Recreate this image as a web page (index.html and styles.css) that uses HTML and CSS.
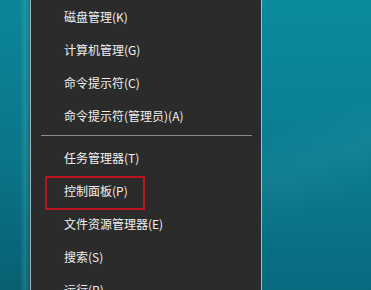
FILE: index.html
```html
<!DOCTYPE html>
<html lang="zh-CN">
<head>
<meta charset="utf-8">
<link rel="stylesheet" href="styles.css">
</head>
<body>
<div class="desktop">
  <div class="strip"></div>
  <ul class="menu">
    <li class="item">磁盘管理(K)</li>
    <li class="item">计算机管理(G)</li>
    <li class="item">命令提示符(C)</li>
    <li class="item">命令提示符(管理员)(A)</li>
    <li class="sep"></li>
    <li class="item">任务管理器(T)</li>
    <li class="item marked">控制面板(P)<span class="mark"></span></li>
    <li class="item">文件资源管理器(E)</li>
    <li class="item">搜索(S)</li>
    <li class="item">运行(R)</li>
  </ul>
  <div class="wall"></div>
</div>
</body>
</html>
```
FILE: styles.css
```css
html, body {
  margin: 0;
  padding: 0;
  width: 371px;
  height: 290px;
  overflow: hidden;
  background: #0b7d90;
}
.desktop {
  display: flex;
  width: 371px;
  height: 290px;
}
.strip {
  width: 30px;
  flex: none;
  background:
    linear-gradient(90deg, rgba(0,0,0,0) 0, rgba(0,0,0,0) 20px, rgba(120,220,235,0.18) 25px, rgba(0,0,0,0.05) 30px),
    linear-gradient(180deg, #0b8698 0%, #0a7587 55%, #095f72 100%);
}
.menu {
  list-style: none;
  margin: 0;
  padding: 0;
  width: 230px;
  flex: none;
  background: #2b2b2b;
  border-left: 1px solid #9fb3b8;
  border-right: 1px solid #a9b8bc;
  font-family: "Noto Sans CJK SC", "Microsoft YaHei", sans-serif;
  font-size: 12px;
  color: #f0f0f0;
}
.item {
  height: 33px;
  line-height: 33px;
  padding-left: 33px;
  white-space: nowrap;
  position: relative;
}
.sep {
  height: 1px;
  margin: 3px 9px 5px 10px;
  background: #8a8a8a;
}
.mark {
  position: absolute;
  left: 14px;
  top: 2px;
  width: 96px;
  height: 30px;
  border: 2px solid #b8161c;
}
.wall {
  flex: 1;
  background:
    linear-gradient(160deg, rgba(255,255,255,0) 40%, rgba(120,200,215,0.08) 55%, rgba(255,255,255,0) 70%),
    linear-gradient(180deg, #0b8b9d 0%, #0a7f92 45%, #096a7e 100%);
}
```
